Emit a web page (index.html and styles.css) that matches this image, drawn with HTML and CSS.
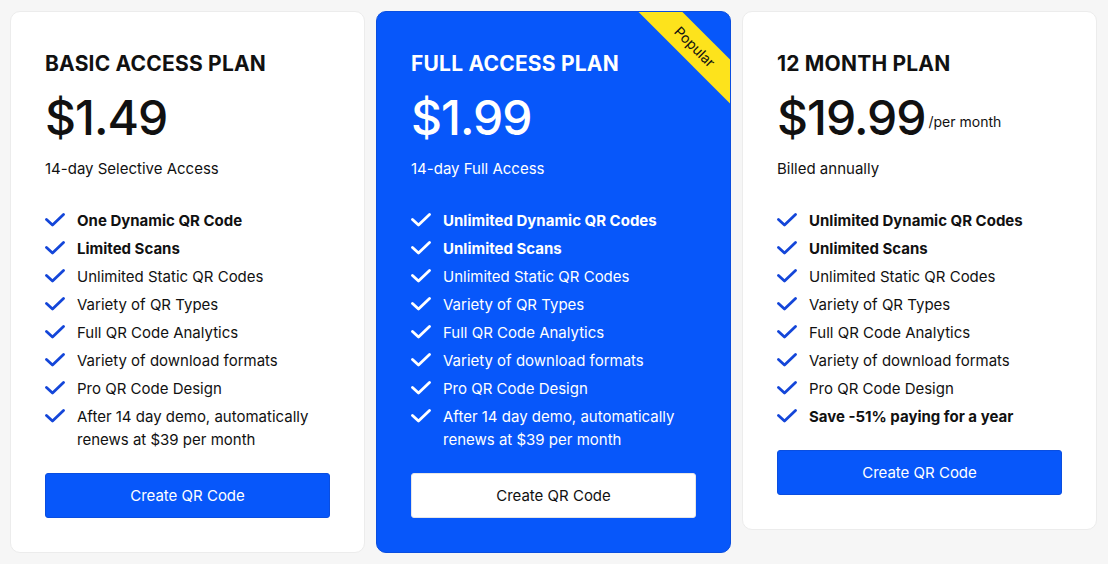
FILE: index.html
```html
<!DOCTYPE html>
<html lang="en">
<head>
<meta charset="utf-8">
<title>Plans</title>
<link rel="stylesheet" href="styles.css">
</head>
<body>
<div class="plans">
  <section class="card">
    <h2 class="title">BASIC ACCESS PLAN</h2>
    <div class="price">$1.49</div>
    <p class="sub">14-day Selective Access</p>
    <ul class="features">
      <li class="strong"><svg class="chk" viewBox="0 0 20 14"><path d="M1.5 6.5 L7.5 12 L18.5 1.5"/></svg><span>One Dynamic QR Code</span></li>
      <li class="strong"><svg class="chk" viewBox="0 0 20 14"><path d="M1.5 6.5 L7.5 12 L18.5 1.5"/></svg><span>Limited Scans</span></li>
      <li><svg class="chk" viewBox="0 0 20 14"><path d="M1.5 6.5 L7.5 12 L18.5 1.5"/></svg><span>Unlimited Static QR Codes</span></li>
      <li><svg class="chk" viewBox="0 0 20 14"><path d="M1.5 6.5 L7.5 12 L18.5 1.5"/></svg><span>Variety of QR Types</span></li>
      <li><svg class="chk" viewBox="0 0 20 14"><path d="M1.5 6.5 L7.5 12 L18.5 1.5"/></svg><span>Full QR Code Analytics</span></li>
      <li><svg class="chk" viewBox="0 0 20 14"><path d="M1.5 6.5 L7.5 12 L18.5 1.5"/></svg><span>Variety of download formats</span></li>
      <li><svg class="chk" viewBox="0 0 20 14"><path d="M1.5 6.5 L7.5 12 L18.5 1.5"/></svg><span>Pro QR Code Design</span></li>
      <li><svg class="chk" viewBox="0 0 20 14"><path d="M1.5 6.5 L7.5 12 L18.5 1.5"/></svg><span>After 14 day demo, automatically renews at $39 per month</span></li>
    </ul>
    <button class="btn">Create QR Code</button>
  </section>

  <section class="card card-blue">
    <div class="ribbon">Popular</div>
    <h2 class="title">FULL ACCESS PLAN</h2>
    <div class="price">$1.99</div>
    <p class="sub">14-day Full Access</p>
    <ul class="features">
      <li class="strong"><svg class="chk" viewBox="0 0 20 14"><path d="M1.5 6.5 L7.5 12 L18.5 1.5"/></svg><span>Unlimited Dynamic QR Codes</span></li>
      <li class="strong"><svg class="chk" viewBox="0 0 20 14"><path d="M1.5 6.5 L7.5 12 L18.5 1.5"/></svg><span>Unlimited Scans</span></li>
      <li><svg class="chk" viewBox="0 0 20 14"><path d="M1.5 6.5 L7.5 12 L18.5 1.5"/></svg><span>Unlimited Static QR Codes</span></li>
      <li><svg class="chk" viewBox="0 0 20 14"><path d="M1.5 6.5 L7.5 12 L18.5 1.5"/></svg><span>Variety of QR Types</span></li>
      <li><svg class="chk" viewBox="0 0 20 14"><path d="M1.5 6.5 L7.5 12 L18.5 1.5"/></svg><span>Full QR Code Analytics</span></li>
      <li><svg class="chk" viewBox="0 0 20 14"><path d="M1.5 6.5 L7.5 12 L18.5 1.5"/></svg><span>Variety of download formats</span></li>
      <li><svg class="chk" viewBox="0 0 20 14"><path d="M1.5 6.5 L7.5 12 L18.5 1.5"/></svg><span>Pro QR Code Design</span></li>
      <li><svg class="chk" viewBox="0 0 20 14"><path d="M1.5 6.5 L7.5 12 L18.5 1.5"/></svg><span>After 14 day demo, automatically renews at $39 per month</span></li>
    </ul>
    <button class="btn btn-white">Create QR Code</button>
  </section>

  <section class="card">
    <h2 class="title">12 MONTH PLAN</h2>
    <div class="price">$19.99<span class="per">/per month</span></div>
    <p class="sub">Billed annually</p>
    <ul class="features">
      <li class="strong"><svg class="chk" viewBox="0 0 20 14"><path d="M1.5 6.5 L7.5 12 L18.5 1.5"/></svg><span>Unlimited Dynamic QR Codes</span></li>
      <li class="strong"><svg class="chk" viewBox="0 0 20 14"><path d="M1.5 6.5 L7.5 12 L18.5 1.5"/></svg><span>Unlimited Scans</span></li>
      <li><svg class="chk" viewBox="0 0 20 14"><path d="M1.5 6.5 L7.5 12 L18.5 1.5"/></svg><span>Unlimited Static QR Codes</span></li>
      <li><svg class="chk" viewBox="0 0 20 14"><path d="M1.5 6.5 L7.5 12 L18.5 1.5"/></svg><span>Variety of QR Types</span></li>
      <li><svg class="chk" viewBox="0 0 20 14"><path d="M1.5 6.5 L7.5 12 L18.5 1.5"/></svg><span>Full QR Code Analytics</span></li>
      <li><svg class="chk" viewBox="0 0 20 14"><path d="M1.5 6.5 L7.5 12 L18.5 1.5"/></svg><span>Variety of download formats</span></li>
      <li><svg class="chk" viewBox="0 0 20 14"><path d="M1.5 6.5 L7.5 12 L18.5 1.5"/></svg><span>Pro QR Code Design</span></li>
      <li class="strong"><svg class="chk" viewBox="0 0 20 14"><path d="M1.5 6.5 L7.5 12 L18.5 1.5"/></svg><span>Save -51% paying for a year</span></li>
    </ul>
    <button class="btn">Create QR Code</button>
  </section>
</div>
</body>
</html>
```

FILE: styles.css
```css
* { box-sizing: border-box; }
html, body { margin: 0; }
body {
  background: #f6f6f6;
  font-family: Inter, "Open Sans", Arial, sans-serif;
  color: #111;
  width: 1108px;
  height: 564px;
  overflow: hidden;
}
.plans {
  display: flex;
  align-items: flex-start;
  gap: 11px;
  padding: 11px 10px;
}
.card {
  position: relative;
  overflow: hidden;
  width: 355px;
  flex: 0 0 355px;
  background: #fff;
  border: 1px solid #ececec;
  border-radius: 10px;
  padding: 37px 34px 34px;
  display: flex;
  flex-direction: column;
}
.card-blue {
  background: #0757fa;
  border-color: #0a4ee0;
  color: #fff;
}
.title {
  margin: 0;
  font-size: 21px;
  line-height: 30px;
  font-weight: 700;
  letter-spacing: 0.2px;
}
.price {
  margin-top: 12px;
  font-size: 48px;
  line-height: 54px;
  font-weight: 500;
  letter-spacing: -1px;
}
.per {
  font-size: 14px;
  line-height: 0;
  font-weight: 400;
  letter-spacing: 0;
  vertical-align: 8px;
  margin-left: 3px;
}
.sub {
  margin: 13px 0 0;
  font-size: 15px;
  line-height: 22px;
}
.features {
  list-style: none;
  margin: 29px 0 0;
  padding: 0;
  display: flex;
  flex-direction: column;
  gap: 5px;
}
.features li {
  display: flex;
  align-items: flex-start;
  gap: 12px;
  font-size: 15px;
  line-height: 23px;
}
.features li.strong { font-weight: 700; }
.chk {
  flex: 0 0 20px;
  width: 20px;
  height: 14px;
  margin-top: 4px;
  fill: none;
  stroke: #1446d9;
  stroke-width: 2.8;
  stroke-linecap: round;
  stroke-linejoin: round;
}
.card-blue .chk { stroke: #fff; }
.btn {
  margin-top: 22px;
  height: 45px;
  width: 100%;
  border: 1px solid #0a4ee0;
  border-radius: 3px;
  background: #0757fa;
  color: #fff;
  font-family: inherit;
  font-size: 15px;
}
.btn-white {
  background: #fff;
  color: #111;
  border-color: #e6e6e6;
}
.ribbon {
  position: absolute;
  top: 19px;
  right: -65px;
  width: 200px;
  height: 31px;
  background: #fde31c;
  color: #111;
  font-size: 14px;
  line-height: 31px;
  text-align: center;
  transform: rotate(45deg);
}
```
